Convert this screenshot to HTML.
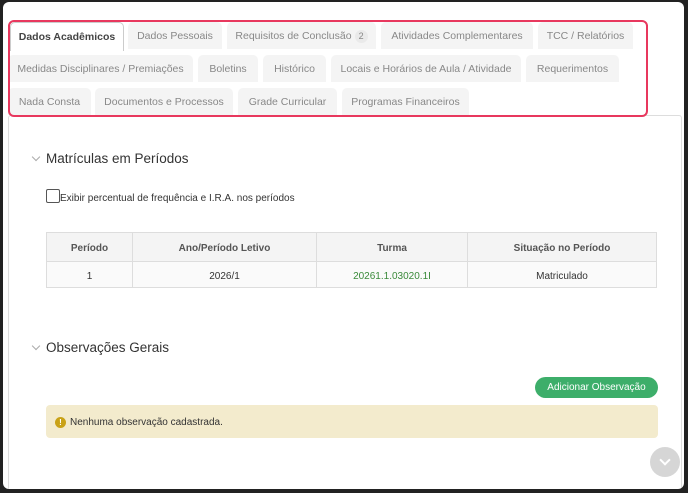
<!DOCTYPE html>
<html><head><meta charset="utf-8"><style>
*{box-sizing:border-box;margin:0;padding:0}
body{width:688px;height:493px;background:#222;font-family:"Liberation Sans",sans-serif;overflow:hidden;position:relative}
.frame{position:absolute;left:3px;top:2px;width:681px;height:487px;background:#fff;border-radius:6px;overflow:hidden}
.panel{position:absolute;left:5px;top:113px;width:674px;height:400px;border:1px solid #ddd;border-radius:3px}
.red{position:absolute;left:5px;top:18px;width:640px;height:97px;border:2px solid #e8385e;border-radius:6px}
.tab{position:absolute;height:27px;background:#f4f4f4;border-radius:5px 5px 0 0;color:#888;font-size:10.5px;line-height:29px;text-align:center;white-space:nowrap}
.tab.act{background:#fff;border:1px solid #ccc;border-bottom:none;color:#444;font-weight:bold}
.badge{display:inline-block;background:#eaeaea;border-radius:8px;font-size:9px;line-height:13px;padding:0 4px;margin-left:3px;color:#888}
h3{position:absolute;font-weight:normal;font-size:13.5px;color:#333}
.chev{position:absolute;width:6px;height:6px;border-right:1px solid #aaa;border-bottom:1px solid #aaa;transform:rotate(45deg)}
table{position:absolute;left:43px;top:230px;width:611px;border-collapse:collapse;font-size:10px;color:#333}
td,th{border:1px solid #ddd;text-align:center;padding-top:3px}
th{height:29px;background:#f4f4f4;font-weight:bold;color:#555}
td{height:26px;background:#fafafa}
</style></head><body>
<div class="frame">
<div class="panel"></div>
<div class="tab act" style="left:7px;top:20px;width:114px;height:29px">Dados Acadêmicos</div>
<div class="tab" style="left:125px;top:20px;width:94px">Dados Pessoais</div>
<div class="tab" style="left:224px;top:20px;width:149px">Requisitos de Conclusão<span class="badge">2</span></div>
<div class="tab" style="left:378px;top:20px;width:152px">Atividades Complementares</div>
<div class="tab" style="left:535px;top:20px;width:95px">TCC / Relatórios</div>
<div class="tab" style="left:5px;top:53px;width:185px">Medidas Disciplinares / Premiações</div>
<div class="tab" style="left:195px;top:53px;width:60px">Boletins</div>
<div class="tab" style="left:260px;top:53px;width:63px">Histórico</div>
<div class="tab" style="left:328px;top:53px;width:190px">Locais e Horários de Aula / Atividade</div>
<div class="tab" style="left:523px;top:53px;width:93px">Requerimentos</div>
<div class="tab" style="left:5px;top:86px;width:83px">Nada Consta</div>
<div class="tab" style="left:92px;top:86px;width:138px">Documentos e Processos</div>
<div class="tab" style="left:235px;top:86px;width:99px">Grade Curricular</div>
<div class="tab" style="left:339px;top:86px;width:127px">Programas Financeiros</div>
<div class="red"></div>

<div class="chev" style="left:30px;top:152px"></div>
<h3 style="left:43px;top:149px">Matrículas em Períodos</h3>
<div style="position:absolute;left:43px;top:187px;width:14px;height:14px;border:1px solid #555;border-radius:2px"></div>
<div style="position:absolute;left:57px;top:191px;font-size:10px;color:#333">Exibir percentual de frequência e I.R.A. nos períodos</div>
<table>
<tr><th style="width:86px">Período</th><th style="width:184px">Ano/Período Letivo</th><th style="width:151px">Turma</th><th>Situação no Período</th></tr>
<tr><td>1</td><td>2026/1</td><td style="color:#3a8a3a">20261.1.03020.1I</td><td>Matriculado</td></tr>
</table>

<div class="chev" style="left:30px;top:341px"></div>
<h3 style="left:43px;top:338px">Observações Gerais</h3>
<div style="position:absolute;left:532px;top:375px;width:123px;height:21px;background:#3dae6a;border-radius:11px;color:#fff;font-size:10px;line-height:22px;text-align:center">Adicionar Observação</div>
<div style="position:absolute;left:43px;top:403px;width:612px;height:33px;background:#f3ebcd;border-radius:4px;font-size:10px;color:#333;line-height:35px;padding-left:24px">Nenhuma observação cadastrada.
<span style="position:absolute;left:9px;top:12px;width:11px;height:11px;border-radius:50%;background:#c9a217;color:#fff;font-size:8px;line-height:11px;text-align:center;font-weight:bold">!</span></div>
<div style="position:absolute;left:647px;top:445px;width:30px;height:30px;border-radius:50%;background:#d6d6d6"><div style="position:absolute;left:11px;top:9px;width:8px;height:8px;border-right:2px solid #fff;border-bottom:2px solid #fff;transform:rotate(45deg)"></div></div>
</div>
</body></html>
